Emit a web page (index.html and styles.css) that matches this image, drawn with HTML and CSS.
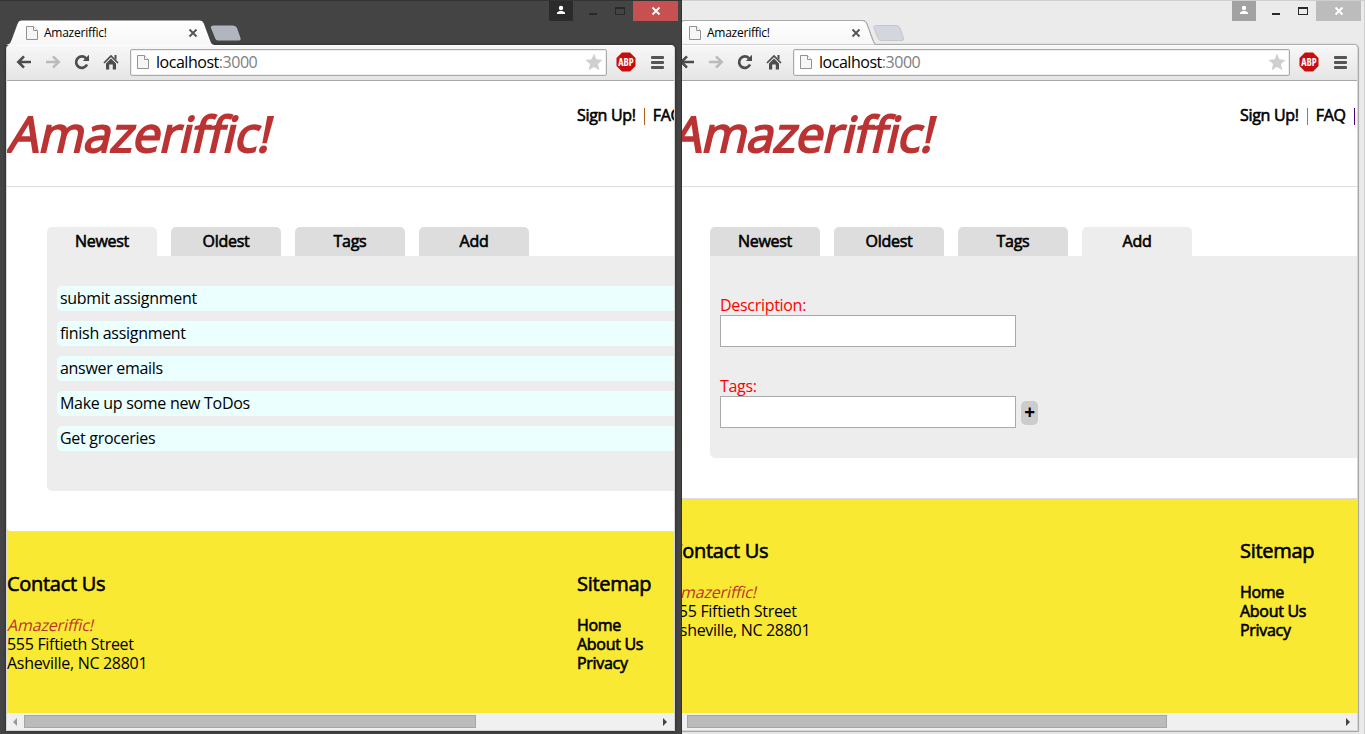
FILE: index.html
```
<!DOCTYPE html>
<html lang="en">
<head>
<meta charset="utf-8">
<title>Amazeriffic!</title>
<link rel="stylesheet" href="styles.css">
</head>
<body>
<svg class="defs" width="0" height="0">
  <defs>
    <linearGradient id="tabfill" x1="0" y1="0" x2="0" y2="1"><stop offset="0" stop-color="#fff"/><stop offset="1" stop-color="#f7f7f7"/></linearGradient>
    <symbol id="tab" viewBox="0 0 208 25"><path d="M0 25C4 24 4.500 23 6 19L11.500 4C12.500 1.500 13.500.5 16 .5H193C196 .5 197 1.500 198 4L203.500 19C205 23 205.500 24 208 25Z" fill="url(#tabfill)"/><path d="M0 25C4 24 4.500 23 6 19L11.500 4C12.500 1.500 13.500.5 16 .5H193C196 .5 197 1.500 198 4L203.500 19C205 23 205.500 24 208 25" fill="none"/></symbol>
    <symbol id="plus-tab" viewBox="0 0 32 16"><path d="M4 .5H23Q26 .5 27 3L30.500 13Q31 15.500 29 15.500H8Q6 15.500 5 13L1 3Q0 .5 4 .5Z"/></symbol>
    <symbol id="doc" viewBox="0 0 12 14"><path d="M.5.500H7.500L11.500 4.500V13.500H.5Z" fill="#f6f6f6" stroke="#929292"/><path d="M7.500.500V4.500H11.500" fill="#fff" stroke="#929292"/></symbol>
    <symbol id="back" viewBox="0 0 16 14"><path d="M15 7H2.500M8 1.300L2.300 7L8 12.700" fill="none" stroke="currentColor" stroke-width="2.600"/></symbol>
    <symbol id="forward" viewBox="0 0 16 14"><path d="M1 7H13.500M8 1.300L13.700 7L8 12.700" fill="none" stroke="currentColor" stroke-width="2.600"/></symbol>
    <symbol id="reload" viewBox="0 0 16 16"><path d="M13 10.500A5.700 5.700 0 1 1 12 4.300" fill="none" stroke="currentColor" stroke-width="2.700"/><path d="M15 .8V7H8.800Z" fill="currentColor"/></symbol>
    <symbol id="home" viewBox="0 0 16 16"><path d="M1 9L8 2L15 9" fill="none" stroke="currentColor" stroke-width="1.700"/><path d="M11.500 1H13.500V6L11.500 4ZM3 9.500L8 4.500L13 9.500V15.500H9.800V10.500H6.200V15.500H3Z" fill="currentColor"/></symbol>
    <symbol id="star" viewBox="0 0 18 18"><path d="M9 .5L11.400 6.300L17.600 6.900L12.900 11L14.400 17.300L9 13.900L3.600 17.300L5.100 11L.4 6.900L6.600 6.300Z" fill="#cfcfcf"/></symbol>
    <symbol id="person" viewBox="0 0 24 20"><path d="M12 4.800A2.200 2.200 0 0 1 12 9.200A2.200 2.200 0 0 1 12 4.800M8 13V11.500L10.500 10H13.500L16 11.500V13Z" fill="#fff"/></symbol>
    <symbol id="octagon" viewBox="0 0 20 20"><path d="M6 .5H14L19.500 6V14L14 19.500H6L.5 14V6Z" fill="#c70d0d"/></symbol>
    <symbol id="cross" viewBox="0 0 10 10"><path d="M1.500 1.500L8.500 8.500M8.500 1.500L1.500 8.500" stroke="currentColor" stroke-width="1.900"/></symbol>
  </defs>
</svg>
<main class="desktop">
  <section class="pane pane-active">
    <div class="window">
      <div class="titlebar">
        <div class="tab"><svg class="tab-shape"><use href="#tab"/></svg><svg class="doc"><use href="#doc"/></svg><span class="tab-title">Amazeriffic!</span><svg class="tab-close"><use href="#cross"/></svg></div>
        <svg class="new-tab"><use href="#plus-tab"/></svg>
        <div class="controls"><span class="user"><svg><use href="#person"/></svg></span><span class="minimize"><i></i></span><span class="maximize"><i></i></span><span class="close"><svg><use href="#cross"/></svg></span></div>
      </div>
      <div class="frame">
        <div class="toolbar">
          <svg class="nav-icon arrow"><use href="#back"/></svg><svg class="nav-icon arrow disabled"><use href="#forward"/></svg><svg class="nav-icon"><use href="#reload"/></svg><svg class="nav-icon"><use href="#home"/></svg>
          <div class="omnibox"><svg class="doc"><use href="#doc"/></svg><span class="url">localhost<em>:3000</em></span><svg class="star"><use href="#star"/></svg></div>
          <span class="abp"><svg><use href="#octagon"/></svg><b>ABP</b></span>
          <span class="menu"><i></i><i></i><i></i></span>
        </div>
        <div class="page">
          <header class="header"><h1>Amazeriffic!</h1><nav class="links"><b>Sign Up!</b><i class="bar orange"></i><b>FAQ</b></nav></header>
          <div class="main">
            <div class="tabs"><span class="active">Newest</span><span>Oldest</span><span>Tags</span><span>Add</span></div>
            <div class="content list">
              <p>submit assignment</p><p>finish assignment</p><p>answer emails</p><p>Make up some new ToDos</p><p>Get groceries</p>
            </div>
          </div>
          <footer class="footer">
            <div class="contact"><h2>Contact Us</h2><p class="brand">Amazeriffic!</p><p>555 Fiftieth Street</p><p>Asheville, NC 28801</p></div>
            <div class="sitemap"><h2>Sitemap</h2><p>Home</p><p>About Us</p><p>Privacy</p></div>
          </footer>
        </div>
        <div class="scrollbar"><i class="arrow-left"></i><i class="thumb"></i><i class="arrow-right"></i></div>
      </div>
    </div>
  </section>
  <section class="pane pane-inactive">
    <div class="window">
      <div class="titlebar">
        <div class="tab"><svg class="tab-shape"><use href="#tab"/></svg><svg class="doc"><use href="#doc"/></svg><span class="tab-title">Amazeriffic!</span><svg class="tab-close"><use href="#cross"/></svg></div>
        <svg class="new-tab"><use href="#plus-tab"/></svg>
        <div class="controls"><span class="user"><svg><use href="#person"/></svg></span><span class="minimize"><i></i></span><span class="maximize"><i></i></span><span class="close"><svg><use href="#cross"/></svg></span></div>
      </div>
      <div class="frame">
        <div class="toolbar">
          <svg class="nav-icon arrow"><use href="#back"/></svg><svg class="nav-icon arrow disabled"><use href="#forward"/></svg><svg class="nav-icon"><use href="#reload"/></svg><svg class="nav-icon"><use href="#home"/></svg>
          <div class="omnibox"><svg class="doc"><use href="#doc"/></svg><span class="url">localhost<em>:3000</em></span><svg class="star"><use href="#star"/></svg></div>
          <span class="abp"><svg><use href="#octagon"/></svg><b>ABP</b></span>
          <span class="menu"><i></i><i></i><i></i></span>
        </div>
        <div class="page">
          <header class="header"><h1>Amazeriffic!</h1><nav class="links"><b>Sign Up!</b><i class="bar blue"></i><b>FAQ</b><i class="bar purple"></i></nav></header>
          <div class="main">
            <div class="tabs"><span>Newest</span><span>Oldest</span><span>Tags</span><span class="active">Add</span></div>
            <div class="content form">
              <label>Description:</label><div class="field-row"><div class="field"></div></div>
              <label>Tags:</label><div class="field-row"><div class="field"></div><span class="add">+</span></div>
            </div>
          </div>
          <footer class="footer">
            <div class="contact"><h2>Contact Us</h2><p class="brand">Amazeriffic!</p><p>555 Fiftieth Street</p><p>Asheville, NC 28801</p></div>
            <div class="sitemap"><h2>Sitemap</h2><p>Home</p><p>About Us</p><p>Privacy</p></div>
          </footer>
        </div>
        <div class="scrollbar"><i class="arrow-left"></i><i class="thumb"></i><i class="arrow-right"></i></div>
      </div>
    </div>
  </section>
</main>
</body>
</html>
```
FILE: styles.css
```
* { box-sizing: border-box; }
body { margin: 0; overflow: hidden; font: 16px/19px "Open Sans", sans-serif; letter-spacing: -.3px; color: #000; }
h1, h2, p { margin: 0; }
svg { display: block; flex: none; }
.defs { position: absolute; }
.desktop { display: grid; grid-template-columns: 682px 683px; height: 734px; }
.pane { overflow: hidden; height: 734px; }
.pane-active { background: #444; border-top: 1px solid #333; border-right: 1px solid #333; }
.pane-inactive { background: #ebebeb; border-top: 1px solid #cfcfcf; border-right: 1px solid #cfcfcf; }
.window { display: flex; flex-direction: column; height: 733px; padding-bottom: 3px; }
.pane-inactive .window { margin-left: -19px; width: 701px; }

.titlebar { display: flex; height: 44px; flex: none; }
.tab { position: relative; display: flex; align-items: center; width: 205px; height: 25px; margin: 19px 0 0 6px; padding-left: 20px; z-index: 1; }
.tab-shape { position: absolute; left: 0; top: 0; width: 208px; height: 25px; z-index: -1; }
.pane-inactive .tab-shape { stroke: #a9a9a9; }
.doc { width: 12px; height: 14px; }
.tab-title { width: 63px; margin-left: 6px; font-size: 12px; white-space: nowrap; letter-spacing: -.25px; }
.tab-close { width: 10px; height: 10px; margin-left: 81px; color: #555; }
.new-tab { width: 32px; height: 16px; margin: 24px 0 0 -1px; fill: #b0b5be; }
.pane-inactive .new-tab { fill: #d3d7dd; stroke: #c3c6cb; stroke-width: 1; }
.controls { display: flex; height: 20px; margin: 0 3px 0 auto; }
.user { width: 24px; background: #2b2b2b; }
.user svg { width: 24px; height: 20px; }
.minimize { padding: 12px 0 0 16px; width: 40px; }
.minimize i { display: block; width: 8px; height: 2px; background: #292929; }
.maximize { width: 20px; padding: 6px 0 0 2px; }
.maximize i { display: block; width: 10px; height: 8px; border: 1px solid #292929; border-top-width: 2px; }
.close { display: grid; place-items: center; width: 45px; background: #c75050; color: #fff; }
.close svg { width: 10px; height: 10px; }
.pane-inactive .user { background: #a2a2a2; }
.pane-inactive .close { background: #bcbcbc; }

.frame { display: flex; flex-direction: column; flex: 1; min-height: 0; margin: 0 6px 0 6px; border: 1px solid #d6d6d6; border-top: 1px solid #fff; border-radius: 4px 4px 0 0; background: #fff; box-shadow: 0 0 3px #222; }
.pane-inactive .frame { box-shadow: 0 0 0 1px #a9a9a9, 0 0 3px #bbb; }
.toolbar { display: flex; align-items: center; height: 35px; flex: none; padding: 0 9px 2px 9px; border-bottom: 1px solid #a9a9a9; border-radius: 3px 3px 0 0; background: linear-gradient(#f7f7f7, #e5e5e5); }
.nav-icon { width: 16px; height: 16px; margin-right: 13px; color: #4d4d4d; }
.nav-icon.arrow { height: 14px; }
.nav-icon.disabled { color: #bbb; }
.omnibox { display: flex; align-items: center; flex: 1; height: 27px; margin-left: -2px; padding: 0 3px 0 6px; border: 1px solid #aaa; border-radius: 2px; background: #fff; box-shadow: inset 0 0 0 1px #eee; }
.url { margin-left: 7px; letter-spacing: -.47px; }
.url em { color: #808080; font-style: normal; }
.star { width: 18px; height: 18px; margin-left: auto; }
.abp { position: relative; width: 20px; height: 20px; margin-left: 9px; }
.abp svg { position: absolute; width: 20px; height: 20px; }
.abp b { position: absolute; left: 0; width: 20px; text-align: center; color: #fff; font-size: 10px; line-height: 20px; letter-spacing: 0; font-stretch: 75%; }
.menu { display: flex; flex-direction: column; gap: 2px; width: 13px; margin-left: 15px; margin-right: 1px; }
.menu i { height: 3px; border-radius: 1px; background: #555; }

.page { flex: 1; min-height: 0; overflow: hidden; display: flex; flex-direction: column; background: #f9e933; white-space: nowrap; }
.header { display: grid; grid-template-columns: 570px 1fr; height: 106px; flex: none; border-bottom: 1px solid #ddd; background: #fff; }
.header h1 { width: max-content; font-size: 49px; line-height: 60px; margin-top: 22px; height: 60px; font-weight: 400; letter-spacing: -.55px; color: #b33; -webkit-text-stroke: 1.9px #b33; transform: skewX(-13deg); transform-origin: 0 80%; }
.links { display: flex; padding-top: 25px; height: 46px; min-width: 0; overflow: hidden; }
.links b, .tabs, .footer h2, .sitemap p { font-weight: 400; -webkit-text-stroke: .6px #000; }
.links b { flex: none; }
.bar { flex: none; width: 1px; height: 17px; margin: 2px 8px 0; }
.orange { background: #b65b13; }
.blue { background: #4091d0; }
.purple { background: #4b0082; }
.main { padding: 40px 0 40px 40px; flex: none; background: #fff; border-radius: 0 0 0 4px; }
.tabs { display: flex; gap: 14px; }
.tabs span { width: 110px; height: 29px; line-height: 29px; text-align: center; border-radius: 5px 5px 0 0; background: #ddd; }
.tabs .active { background: #ededed; }
.content { background: #ededed; border-radius: 0 0 0 5px; }
.list { display: flex; flex-direction: column; gap: 10px; height: 235px; padding: 30px 0 0 10px; }
.list p { height: 25px; line-height: 25px; padding-left: 3px; border-radius: 5px 0 0 5px; background: #ebffff; }
.form { height: 202px; padding: 40px 0 0 10px; }
.form label { display: block; height: 19px; color: #f00; }
.field-row { display: flex; align-items: center; gap: 5px; height: 32px; margin-bottom: 30px; }
.field { width: 296px; height: 32px; border: 1px solid #a9a9a9; background: #fff; }
.add { width: 17px; height: 24px; border-radius: 5px; background: #ccc; text-align: center; font-size: 19px; line-height: 23px; font-weight: 700; margin-top: 2px; }
.footer { flex: 1; display: grid; grid-template-columns: 570px 1fr; padding-top: 40px; border-top: 1px solid #ddd; background: #f9e933; }
.footer h2 { font-size: 20px; line-height: 24px; margin-bottom: 20px; }
.brand { width: max-content; color: #b33; letter-spacing: -.15px; transform: skewX(-13deg); transform-origin: 0 80%; }
.scrollbar { display: flex; align-items: center; height: 17px; flex: none; padding: 0 7px 0 5px; background: #f0f0f0; }
.thumb { width: 452px; height: 13px; margin-left: 7px; border: 1px solid #a6a6a6; background: #bbb; }
.pane-inactive .thumb { width: 480px; }
.arrow-left, .arrow-right { border: 4px solid transparent; }
.arrow-left { border-right-color: #999; border-left: 0; margin-left: 1px; }
.arrow-right { border-left-color: #444; border-right: 0; margin-left: auto; }
```
